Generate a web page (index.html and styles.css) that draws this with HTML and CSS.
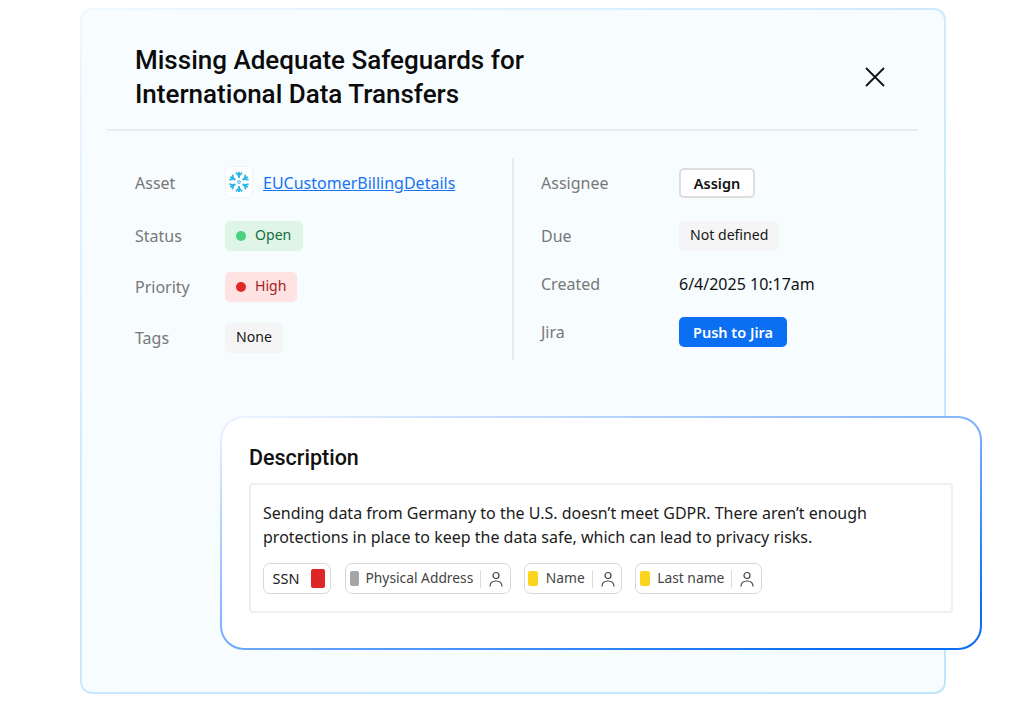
FILE: index.html
```html
<!DOCTYPE html>
<html lang="en">
<head>
<meta charset="utf-8">
<title>Missing Adequate Safeguards</title>
<link rel="stylesheet" href="styles.css">
</head>
<body>
<main class="stage">
  <section class="card">
    <header class="head">
      <h1 class="title">Missing Adequate Safeguards for<br>International Data Transfers</h1>
      <svg class="close" viewBox="0 0 20 20" width="20" height="20" aria-label="Close"><path d="M1 1L19 19M19 1L1 19" fill="none" stroke="#111" stroke-width="1.8"/></svg>
    </header>
    <div class="meta">
      <div class="col col-left">
        <div class="row row-asset"><span class="label label-asset">Asset</span>
          <span class="logo"><svg viewBox="0 0 24 24" width="22" height="22"><g fill="none" stroke="#29b5e8" stroke-width="2.200"><g id="arm"><path d="M12 1V7.500"/><path d="M8.600 1.800L12 5.200L15.400 1.800" stroke-width="1.800"/></g><use href="#arm" transform="rotate(60 12 12)"/><use href="#arm" transform="rotate(120 12 12)"/><use href="#arm" transform="rotate(180 12 12)"/><use href="#arm" transform="rotate(240 12 12)"/><use href="#arm" transform="rotate(300 12 12)"/></g><circle cx="12" cy="12" r="1.500" fill="none" stroke="#29b5e8" stroke-width="1"/></svg></span>
          <a class="link" href="#">EUCustomerBillingDetails</a></div>
        <div class="row row-status"><span class="label">Status</span><span class="pill pill-green"><i class="dot dot-green"></i>Open</span></div>
        <div class="row row-priority"><span class="label">Priority</span><span class="pill pill-red"><i class="dot dot-red"></i>High</span></div>
        <div class="row row-tags"><span class="label">Tags</span><span class="pill pill-grey">None</span></div>
      </div>
      <div class="col col-right">
        <div class="row row-assignee"><span class="label label-right">Assignee</span><button class="btn btn-white">Assign</button></div>
        <div class="row row-due"><span class="label label-right">Due</span><span class="pill pill-grey">Not defined</span></div>
        <div class="row row-created"><span class="label label-right">Created</span><span class="value">6/4/2025 10:17am</span></div>
        <div class="row row-jira"><span class="label label-right">Jira</span><button class="btn btn-blue">Push to Jira</button></div>
      </div>
    </div>
  </section>

  <section class="desc">
    <h2 class="desc-title">Description</h2>
    <div class="desc-box">
      <p class="desc-text">Sending data from Germany to the U.S. doesn’t meet GDPR. There aren’t enough protections in place to keep the data safe, which can lead to privacy risks.</p>
      <div class="chips">
        <span class="chip chip-ssn">SSN<i class="flag flag-red"></i></span>
        <span class="chip"><i class="flag flag-grey"></i><span class="chip-name">Physical Address</span><span class="chip-sep"></span><svg class="person" viewBox="0 0 14 16" width="14" height="16"><circle cx="7" cy="4.500" r="3" fill="none" stroke="#444" stroke-width="1.200"/><path d="M1 15.500c0-3.500 2.300-5.500 6-5.500s6 2 6 5.500" fill="none" stroke="#444" stroke-width="1.200"/></svg></span>
        <span class="chip"><i class="flag flag-yellow"></i><span class="chip-name">Name</span><span class="chip-sep"></span><svg class="person" viewBox="0 0 14 16" width="14" height="16"><circle cx="7" cy="4.500" r="3" fill="none" stroke="#444" stroke-width="1.200"/><path d="M1 15.500c0-3.500 2.300-5.500 6-5.500s6 2 6 5.500" fill="none" stroke="#444" stroke-width="1.200"/></svg></span>
        <span class="chip"><i class="flag flag-yellow"></i><span class="chip-name">Last name</span><span class="chip-sep"></span><svg class="person" viewBox="0 0 14 16" width="14" height="16"><circle cx="7" cy="4.500" r="3" fill="none" stroke="#444" stroke-width="1.200"/><path d="M1 15.500c0-3.500 2.300-5.500 6-5.500s6 2 6 5.500" fill="none" stroke="#444" stroke-width="1.200"/></svg></span>
      </div>
    </div>
  </section>
</main>
</body>
</html>
```

FILE: styles.css
```css
* { box-sizing: border-box; }
html, body { margin: 0; padding: 0; background: #fff; }
body { font-family: "Noto Sans", "Open Sans", sans-serif; color: #111; overflow: hidden; }
.stage { position: relative; width: 1025px; height: 701px; padding: 8px 0 0 80px; }

.card {
  width: 866px; height: 686px;
  border: 2px solid transparent;
  background: linear-gradient(#f7fcff, #f7fcff) padding-box,
    linear-gradient(150deg, #eef8ff 0%, #cfeaff 40%, #bfe6ff 100%) border-box;
  border-radius: 12px;
  padding: 0 26px 0 25px;
}
.head {
  display: flex; justify-content: space-between; align-items: flex-start;
  height: 121px; border-bottom: 2px solid #e9edef;
  padding: 33px 33px 0 28px;
}
.title { margin: 0; font: 500 26px/34px Roboto, sans-serif; color: #0b0b0b; }
.close { margin-top: 24px; }

.meta { display: flex; margin-top: 27px; height: 202px; }
.col { display: flex; flex-direction: column; }
.col-left { width: 407px; padding-left: 28px; border-right: 2px solid #e6eaec; }
.col-right { padding-left: 27px; }
.row { display: flex; align-items: center; font-size: 16px; }
.label { width: 90px; color: #787878; }
.label-right { width: 138px; }
.label-asset { padding-top: 2px; }
.row-asset { margin-top: 8px; height: 32px; }
.row-status { margin-top: 23px; height: 30px; }
.row-priority { margin-top: 21px; height: 30px; }
.row-tags { margin-top: 21px; height: 30px; }
.row-assignee { margin-top: 10px; height: 30px; }
.row-due { margin-top: 23px; height: 30px; }
.row-created { margin-top: 18px; height: 30px; }
.row-jira { margin-top: 18px; height: 30px; }

.logo {
  display: flex; align-items: center; justify-content: center;
  width: 28px; height: 32px; background: #fff;
  border: 1px solid #f1f4f6; border-radius: 6px; margin-right: 10px;
}
.link { color: #1a73f0; text-decoration: underline; font-size: 16px; padding-top: 2px; }
.pill {
  display: inline-flex; align-items: center; height: 30px;
  padding: 0 11px 3px; border-radius: 5px; font-size: 14.100px;
}
.pill-green { background: #dff5e6; color: #156b3c; width: 78px; }
.pill-red { background: #ffe2e2; color: #a51f1f; width: 72px; }
.pill-grey { background: #f5f5f5; color: #171717; }
.dot { width: 10px; height: 10px; border-radius: 50%; margin: 3px 9px 0 0; flex: none; }
.dot-green { background: #4ad07f; }
.dot-red { background: #e12828; }
.value { font-size: 16px; color: #111; }
.btn { font-family: inherit; font-weight: 600; font-size: 14.500px; height: 30px; border-radius: 5px; padding: 0; }
.btn-white { width: 76px; background: #fff; color: #111; border: 2px solid #dedede; }
.btn-blue { width: 108px; background: #0a6ff2; color: #fff; border: 0; }

.desc {
  position: absolute; left: 220px; top: 416px;
  width: 762px; height: 234px;
  border: 2px solid transparent; border-radius: 24px;
  background: linear-gradient(#fff, #fff) padding-box,
    linear-gradient(165deg, #eef5ff 0%, #7fb2ff 48%, #0a6ff2 90%) border-box;
  padding: 0 27px;
}
.desc-title { margin: 25px 0 10px; font: 500 21.500px/30px Roboto, sans-serif; color: #111; }
.desc-box {
  width: 704px; height: 130px;
  border: 2px solid #efefef; border-radius: 4px;
  padding: 16px 12px 0;
}
.desc-text { margin: 0; font-size: 16px; line-height: 24px; color: #1c1c1c; }
.chips { display: flex; gap: 13px; margin-top: 14px; }
.chip {
  display: inline-flex; align-items: center; height: 31px;
  border: 1.500px solid #d8d8d8; border-radius: 7px; background: #fff;
  padding: 0 6.500px 0 3.500px; font-size: 13.800px; color: #444;
}
.chip-ssn { width: 68px; margin-right: 1px; padding: 0 3.500px 2px 8.500px; font-size: 14.500px; color: #1c1c1c; }
.flag { width: 9px; height: 15px; border-radius: 2px; margin: 0 7px 0 0; flex: none; }
.flag-red { width: 14px; height: 19px; background: #df2626; margin: 2px 0 0 12px; }
.flag-grey { background: #a6a6a6; }
.flag-yellow { width: 10px; margin-right: 7.500px; background: #fbd420; }
.chip-name { margin-right: 7px; padding-bottom: 2px; }
.chip-sep { width: 1px; height: 18px; background: #dcdcdc; margin-right: 8px; }
```
